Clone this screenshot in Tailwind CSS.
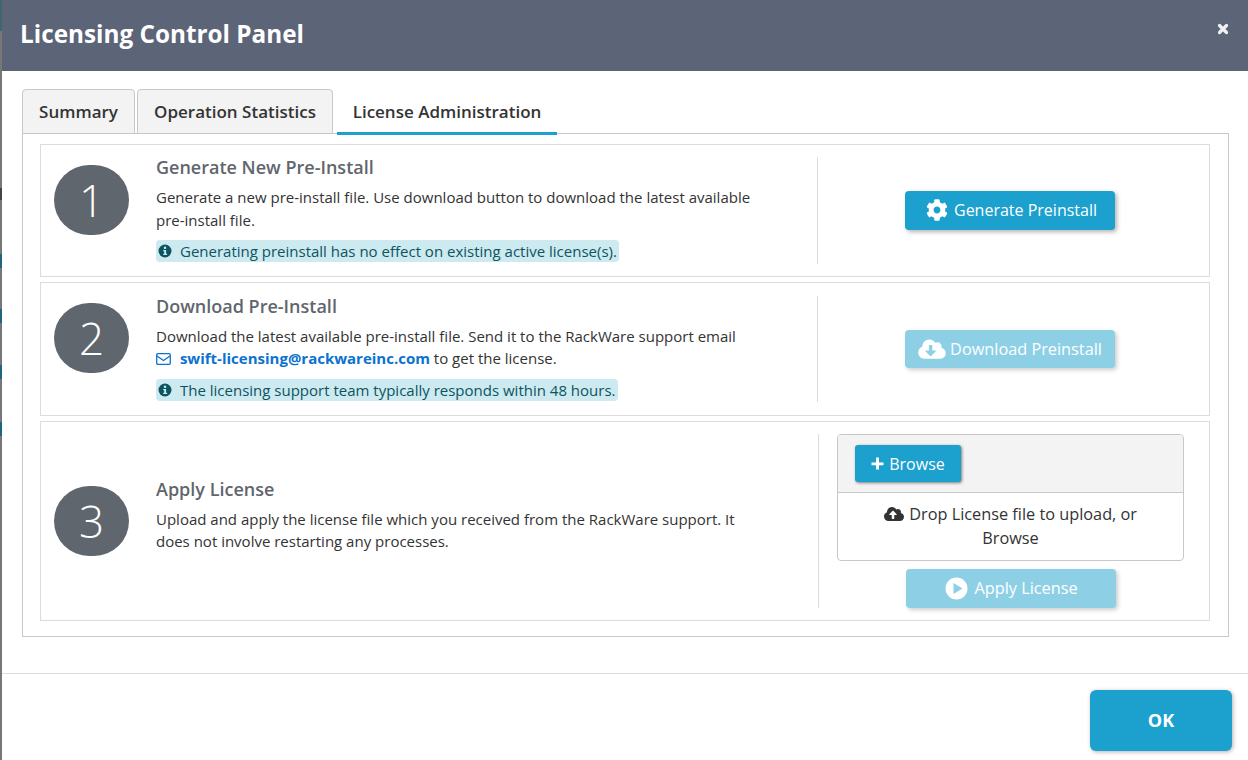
<!DOCTYPE html>
<html lang="en">
<head>
    <meta charset="UTF-8">
    <title>Licensing Control Panel</title>
    <script src="https://cdn.jsdelivr.net/npm/@tailwindcss/browser@4"></script>
</head>
<body class="bg-[#777] font-['Open_Sans',sans-serif] text-[15px] text-[#333] overflow-hidden">
<div class="h-[760px] w-[1248px] flex">
    <!-- page behind the modal -->
    <div class="w-[2px] shrink-0 flex flex-col bg-[#777]">
        <div class="h-[31px] bg-[#3f6473]"></div>
        <div class="h-[157px]"></div>
        <div class="h-[12px] bg-[#444]"></div>
        <div class="h-[54px]"></div>
        <div class="h-[14px] bg-[#1f6580]"></div>
        <div class="h-[41px]"></div>
        <div class="h-[14px] bg-[#1f6580]"></div>
        <div class="h-[42px]"></div>
        <div class="h-[14px] bg-[#1f6580]"></div>
        <div class="h-[43px]"></div>
        <div class="h-[14px] bg-[#1f6580]"></div>
    </div>

    <div class="flex-1 bg-white flex flex-col">
        <!-- Header -->
        <div class="h-[71px] bg-[#5c6478] flex items-center justify-between pl-[18px] pr-[19px] shrink-0">
            <h1 class="text-[24.300px] font-bold text-white mb-[3px]">Licensing Control Panel</h1>
            <svg class="w-[12px] h-[12px] mb-[14px]" viewBox="0 0 12 12"><path d="M2.5 2.5l7 7M9.500 2.500l-7 7" stroke="#f2f2f2" stroke-width="3.200" stroke-linecap="round"/></svg>
        </div>

        <div class="pl-[20px] pr-[19px] pt-[18px] h-[602px] shrink-0">
            <!-- Tabs -->
            <div class="flex h-[45px] items-start relative z-10 -mb-[1px]">
                <div class="h-[45px] w-[113px] mr-[2px] bg-[#f3f3f3] border border-[#c8c8c8] rounded-t-[4px] flex items-center justify-center text-[17px] font-semibold">Summary</div>
                <div class="h-[45px] w-[196px] mr-[4px] bg-[#f3f3f3] border border-[#c8c8c8] rounded-t-[4px] flex items-center justify-center text-[17px] font-semibold">Operation Statistics</div>
                <div class="h-[46px] w-[220px] border-b-[3px] border-[#1ca0ce] flex items-center justify-center pt-[3px] text-[17px] font-semibold">License Administration</div>
            </div>

            <!-- Pane -->
            <div class="h-[504px] border border-[#c8c8c8] pl-[17px] pr-[18px] pt-[10px] flex flex-col gap-[5px]">
                <!-- Step 1 -->
                <div class="h-[133px] border border-[#dcdcdc] flex items-start shrink-0">
                    <div class="w-[115px] shrink-0 pl-[13px] pt-[20px]">
                        <div class="w-[75px] h-[70px] rounded-full bg-[#5f666d] text-white text-[44px] font-[350] flex items-center justify-center">1</div>
                    </div>
                    <div class="w-[661px] shrink-0 pr-[60px] h-full pt-[10px]">
                        <h3 class="text-[18px] font-semibold text-[#5f666d] leading-[24px]">Generate New Pre-Install</h3>
                        <p class="mt-[7px] leading-[23px]">Generate a new pre-install file. Use download button to download the latest available pre-install file.</p>
                        <div class="mt-[8px]"><span class="inline-flex items-center h-[22px] bg-[#cdeaf0] rounded-[4px] pr-[2px] text-[#0c5460] whitespace-nowrap"><svg class="w-[14px] h-[14px] mx-[2px] mr-[8px]" viewBox="0 0 14 14"><circle cx="7" cy="7" r="6.500" fill="#0c5460"/><rect x="5.900" y="2.700" width="2.200" height="2.200" fill="#cdeaf0"/><path d="M5.200 6h2.900v3.800h1v1.200H5.200V9.800h1V7.200h-1z" fill="#cdeaf0"/></svg>Generating preinstall has no effect on existing active license(s).</span></div>
                    </div>
                    <div class="flex-1 self-stretch my-[12px] border-l border-[#dcdcdc] flex items-center justify-center">
                        <button class="w-[210px] h-[39px] mt-[-1px] mr-[7px] pl-[3px] rounded-[4px] bg-[#1ca0ce] text-white text-[16px] shadow-[2px_2px_4px_rgba(0,0,0,0.3)] flex items-center justify-center">
                            <svg class="w-[22px] h-[22px] mr-[6px]" viewBox="0 0 512 512" fill="#fff"><path d="M487.400 315.700l-42.600-24.600c4.300-23.200 4.300-47 0-70.200l42.600-24.600c4.900-2.800 7.100-8.600 5.500-14-11.100-35.600-30-67.800-54.700-94.600-3.800-4.100-10-5.100-14.800-2.300L380.800 110c-17.900-15.400-38.500-27.300-60.800-35.100V25.800c0-5.600-3.900-10.500-9.400-11.700-36.700-8.200-74.300-7.800-109.200 0-5.500 1.200-9.400 6.100-9.400 11.700V75c-22.200 7.900-42.800 19.800-60.800 35.100L88.700 85.500c-4.900-2.800-11-1.900-14.800 2.300-24.700 26.700-43.600 58.900-54.700 94.600-1.700 5.400.6 11.200 5.500 14L67.300 221c-4.300 23.200-4.300 47 0 70.200l-42.600 24.600c-4.900 2.800-7.100 8.600-5.500 14 11.100 35.600 30 67.800 54.700 94.600 3.800 4.100 10 5.100 14.800 2.300l42.600-24.600c17.900 15.400 38.500 27.300 60.800 35.100v49.200c0 5.600 3.900 10.500 9.400 11.700 36.700 8.200 74.300 7.800 109.200 0 5.500-1.200 9.400-6.100 9.400-11.700v-49.200c22.200-7.900 42.800-19.800 60.800-35.100l42.600 24.600c4.900 2.800 11 1.900 14.800-2.300 24.700-26.700 43.600-58.900 54.700-94.600 1.500-5.500-.7-11.300-5.600-14.100zM256 336c-44.100 0-80-35.900-80-80s35.900-80 80-80 80 35.900 80 80-35.900 80-80 80z"/></svg>
                            Generate Preinstall
                        </button>
                    </div>
                </div>

                <!-- Step 2 -->
                <div class="h-[134px] border border-[#dcdcdc] flex items-start shrink-0">
                    <div class="w-[115px] shrink-0 pl-[13px] pt-[20px]">
                        <div class="w-[75px] h-[70px] rounded-full bg-[#5f666d] text-white text-[44px] font-[350] flex items-center justify-center">2</div>
                    </div>
                    <div class="w-[661px] shrink-0 pr-[40px] h-full pt-[11px]">
                        <h3 class="text-[18px] font-semibold text-[#5f666d] leading-[24px]">Download Pre-Install</h3>
                        <p class="mt-[7px] leading-[22px]">Download the latest available pre-install file. Send it to the RackWare support email<br>
                            <svg class="inline w-[15px] h-[12px] mr-[5px] align-[-1px]" viewBox="0 0 15 12" fill="none" stroke="#0b72cf" stroke-width="1.300"><rect x="0.700" y="0.700" width="13.600" height="10.600" rx="1.200"/><path d="M1 3l6.500 4.500L14 3"/></svg>
                            <a class="font-bold text-[#0b72cf]">swift-licensing@rackwareinc.com</a> to get the license.</p>
                        <div class="mt-[10px]"><span class="inline-flex items-center h-[22px] bg-[#cdeaf0] rounded-[4px] pr-[2px] text-[#0c5460] whitespace-nowrap"><svg class="w-[14px] h-[14px] mx-[2px] mr-[8px]" viewBox="0 0 14 14"><circle cx="7" cy="7" r="6.500" fill="#0c5460"/><rect x="5.900" y="2.700" width="2.200" height="2.200" fill="#cdeaf0"/><path d="M5.200 6h2.900v3.800h1v1.200H5.200V9.800h1V7.200h-1z" fill="#cdeaf0"/></svg>The licensing support team typically responds within 48 hours.</span></div>
                    </div>
                    <div class="flex-1 self-stretch my-[13px] border-l border-[#dcdcdc] flex items-center justify-center">
                        <button class="w-[210px] h-[38px] mr-[7px] rounded-[4px] bg-[#8dd0e6] text-white text-[16.300px] shadow-[2px_2px_4px_rgba(0,0,0,0.2)] flex items-center justify-center">
                            <svg class="w-[28px] h-[22px] mr-[4px]" viewBox="0 0 640 512" fill="#fff"><path d="M537.600 226.600c4.100-10.700 6.400-22.400 6.400-34.600 0-53-43-96-96-96-19.700 0-38.100 6-53.300 16.200C367 64.200 315.300 32 256 32c-88.400 0-160 71.600-160 160 0 2.700.1 5.400.2 8.100C40.200 219.800 0 273.200 0 336c0 79.500 64.500 144 144 144h368c70.700 0 128-57.300 128-128 0-61.900-44-113.600-102.400-125.400zm-132.900 88.700L299.300 420.700c-6.200 6.200-16.400 6.200-22.600 0L171.300 315.300c-10.100-10.100-2.900-27.300 11.300-27.300H248V176c0-8.800 7.200-16 16-16h48c8.800 0 16 7.200 16 16v112h65.400c14.200 0 21.400 17.200 11.300 27.300z"/></svg>
                            Download Preinstall
                        </button>
                    </div>
                </div>

                <!-- Step 3 -->
                <div class="h-[200px] border border-[#dcdcdc] flex items-center shrink-0">
                    <div class="w-[115px] shrink-0 pl-[13px]">
                        <div class="w-[75px] h-[70px] rounded-full bg-[#5f666d] text-white text-[44px] font-[350] flex items-center justify-center">3</div>
                    </div>
                    <div class="w-[662px] shrink-0 pr-[60px] mb-[14px]">
                        <h3 class="text-[18px] font-semibold text-[#5f666d] leading-[24px]">Apply License</h3>
                        <p class="mt-[7px] leading-[22px]">Upload and apply the license file which you received from the RackWare support. It does not involve restarting any processes.</p>
                    </div>
                    <div class="flex-1 self-stretch my-[12px] border-l border-[#dcdcdc] pl-[18px] flex flex-col">
                        <div class="w-[347px] h-[127px] border border-[#c8c8c8] rounded-[4px] overflow-hidden flex flex-col">
                            <div class="h-[58px] bg-[#f3f3f3] border-b border-[#c8c8c8] pl-[17px] pt-[10px]">
                                <button class="w-[106px] h-[37px] rounded-[3px] bg-[#1ca0ce] text-white text-[16px] shadow-[1px_1px_3px_rgba(0,0,0,0.5)] flex items-center justify-center">
                                    <svg class="w-[13px] h-[13px] mr-[5px]" viewBox="0 0 13 13" fill="#fff"><path d="M5 0.500h3v5h4.500v2.700H8v4.300H5V8.200H0.500V5.500H5z"/></svg>
                                    Browse
                                </button>
                            </div>
                            <div class="flex-1 text-center text-[16.300px] leading-[24px] pt-[9px] px-[40px]">
                                <svg class="inline w-[20px] h-[16px] mr-[1px] align-[-2px]" viewBox="0 0 640 512" fill="#333"><path d="M537.600 226.600c4.100-10.700 6.400-22.400 6.400-34.600 0-53-43-96-96-96-19.700 0-38.100 6-53.300 16.200C367 64.200 315.300 32 256 32c-88.400 0-160 71.600-160 160 0 2.700.1 5.400.2 8.100C40.200 219.800 0 273.200 0 336c0 79.500 64.500 144 144 144h368c70.700 0 128-57.300 128-128 0-61.900-44-113.600-102.400-125.400zM393.400 288H328v112c0 8.800-7.200 16-16 16h-48c-8.800 0-16-7.200-16-16V288h-65.400c-14.300 0-21.400-17.200-11.300-27.300l105.400-105.400c6.200-6.200 16.400-6.200 22.600 0l105.400 105.400c10.100 10.100 2.900 27.300-11.300 27.300z"/></svg>
                                Drop License file to upload, or Browse
                            </div>
                        </div>
                        <button class="w-[210px] h-[39px] ml-[69px] mt-[8px] pl-[1px] pb-[1px] rounded-[4px] bg-[#8dd0e6] text-white text-[16.300px] shadow-[2px_2px_4px_rgba(0,0,0,0.2)] flex items-center justify-center">
                            <svg class="w-[23px] h-[23px] mr-[6px]" viewBox="0 0 23 23"><circle cx="11.500" cy="11.500" r="11" fill="#fff"/><path d="M8.500 6l9 5.500-9 5.500z" fill="#8dd0e6"/></svg>
                            Apply License
                        </button>
                    </div>
                </div>
            </div>
        </div>

        <!-- Footer -->
        <div class="flex-1 border-t border-[#dcdcdc] flex justify-end items-start pt-[16px] pr-[16px]">
            <button class="w-[142px] h-[61px] rounded-[6px] bg-[#1ca0ce] text-white text-[18px] font-bold shadow-[1px_1px_4px_rgba(0,0,0,0.3)]">OK</button>
        </div>
    </div>
</div>
</body>
</html>
